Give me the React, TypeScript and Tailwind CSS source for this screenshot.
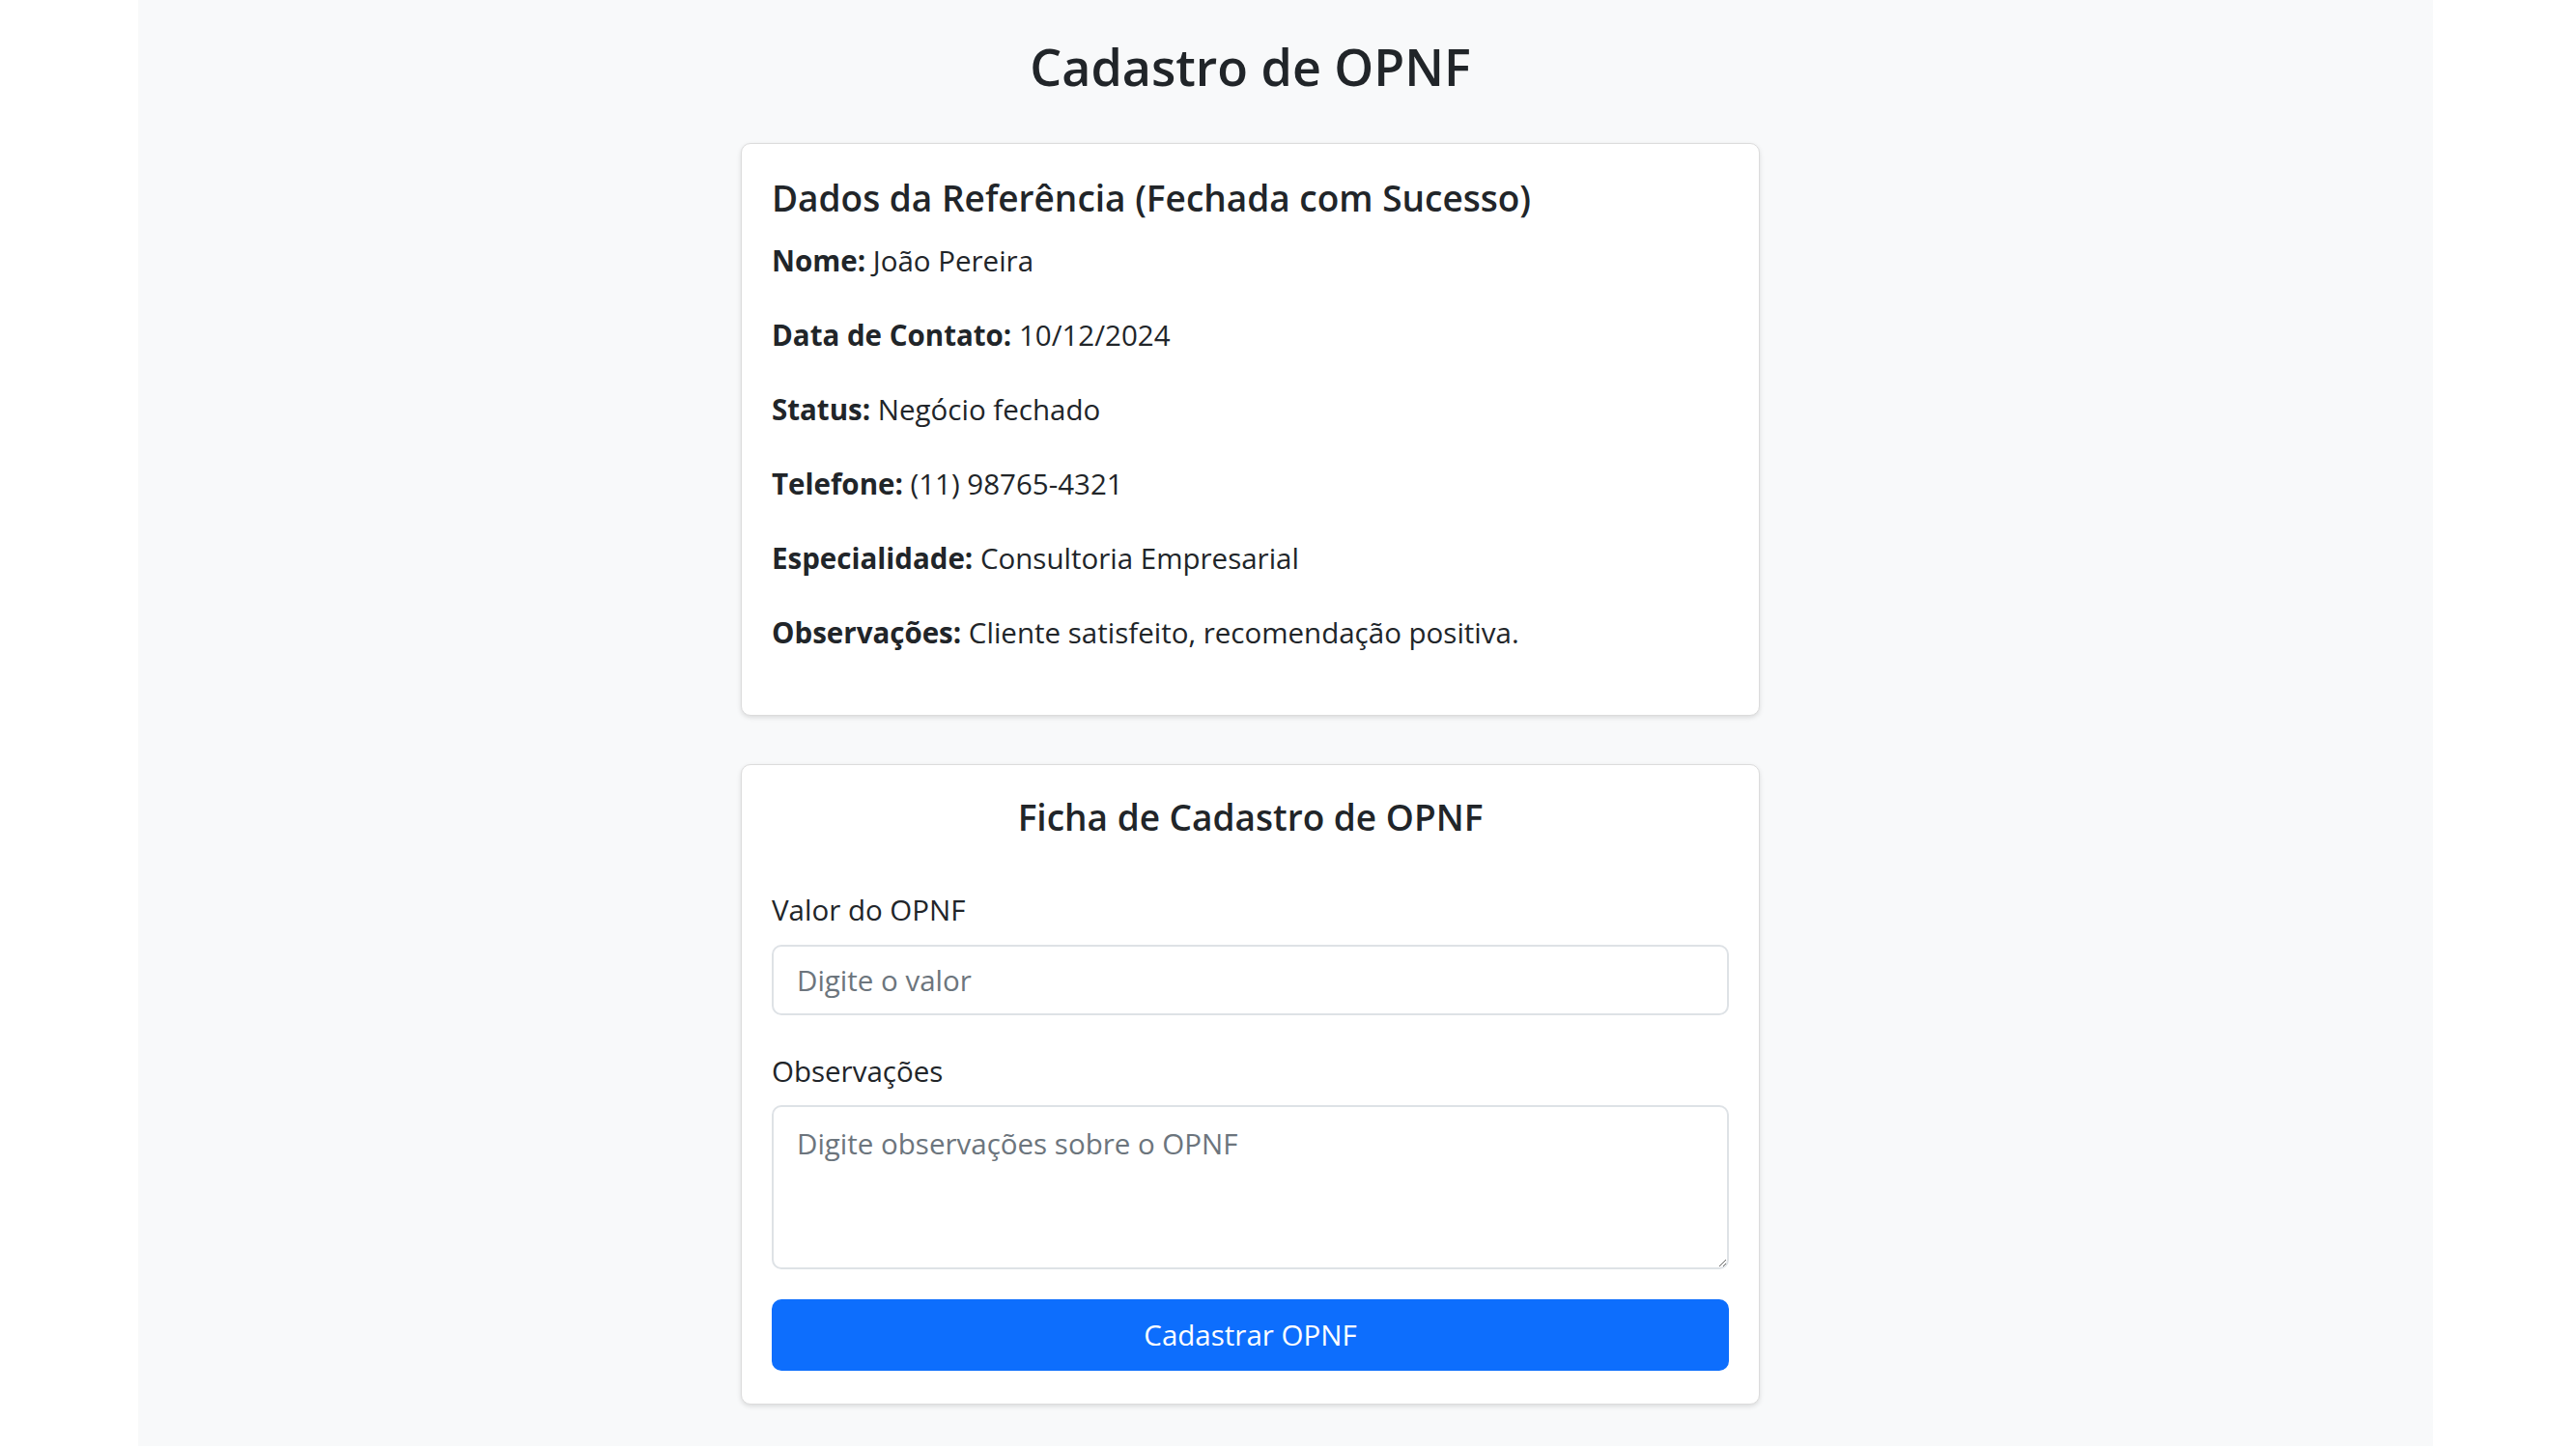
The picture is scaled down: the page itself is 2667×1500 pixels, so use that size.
import React from "react";

const dados = [
  { label: "Nome:", value: "João Pereira" },
  { label: "Data de Contato:", value: "10/12/2024" },
  { label: "Status:", value: "Negócio fechado" },
  { label: "Telefone:", value: "(11) 98765-4321" },
  { label: "Especialidade:", value: "Consultoria Empresarial" },
  { label: "Observações:", value: "Cliente satisfeito, recomendação positiva." },
];

export default function App() {
  return (
    <div className="min-h-screen bg-white font-['Open_Sans',sans-serif] text-[#212529]">
      <div className="ml-[143px] w-[2376px] h-[1497px] bg-[#f8f9fa] pt-[36px]">
        <div className="ml-[624px] w-[1055px]">
          <h1 className="text-center text-[52px] leading-[65px] font-semibold">
            Cadastro de OPNF
          </h1>

          <div className="mt-[47px] bg-white border border-[#dcdcdc] rounded-[10px] shadow-[0_2px_5px_rgba(0,0,0,0.12)] px-[31px] pt-[31px] pb-[65px]">
            <h4 className="text-[37px] leading-[49px] font-semibold">
              Dados da Referência (Fechada com Sucesso)
            </h4>
            <div className="mt-[20px] flex flex-col gap-[36px]">
              {dados.map((d) => (
                <p key={d.label} className="text-[29.5px] leading-[41px]">
                  <span className="font-bold">{d.label}</span> {d.value}
                </p>
              ))}
            </div>
          </div>

          <div className="mt-[50px] bg-white border border-[#dcdcdc] rounded-[10px] shadow-[0_2px_5px_rgba(0,0,0,0.12)] px-[31px] pt-[29px] pb-[34px]">
            <h4 className="text-center text-[37px] leading-[49px] font-semibold">
              Ficha de Cadastro de OPNF
            </h4>
            <form className="mt-[51px] flex flex-col" onSubmit={(e) => e.preventDefault()}>
              <label className="text-[29.5px] leading-[41px]">Valor do OPNF</label>
              <input
                type="text"
                placeholder="Digite o valor"
                className="mt-[16px] h-[73px] w-full rounded-[10px] border-2 border-[#dee2e6] bg-white px-[24px] text-[29.5px] outline-none placeholder:text-[#6c757d]"
              />
              <label className="mt-[37px] text-[29.5px] leading-[41px]">Observações</label>
              <textarea
                placeholder="Digite observações sobre o OPNF"
                className="mt-[15px] h-[170px] w-full rounded-[10px] border-2 border-[#dee2e6] bg-white px-[24px] py-[17px] text-[29.5px] leading-[41px] outline-none placeholder:text-[#6c757d]"
              />
              <button
                type="submit"
                className="mt-[31px] h-[74px] w-full rounded-[10px] bg-[#0d6efd] text-[29.5px] text-white"
              >
                Cadastrar OPNF
              </button>
            </form>
          </div>
        </div>
      </div>
    </div>
  );
}
